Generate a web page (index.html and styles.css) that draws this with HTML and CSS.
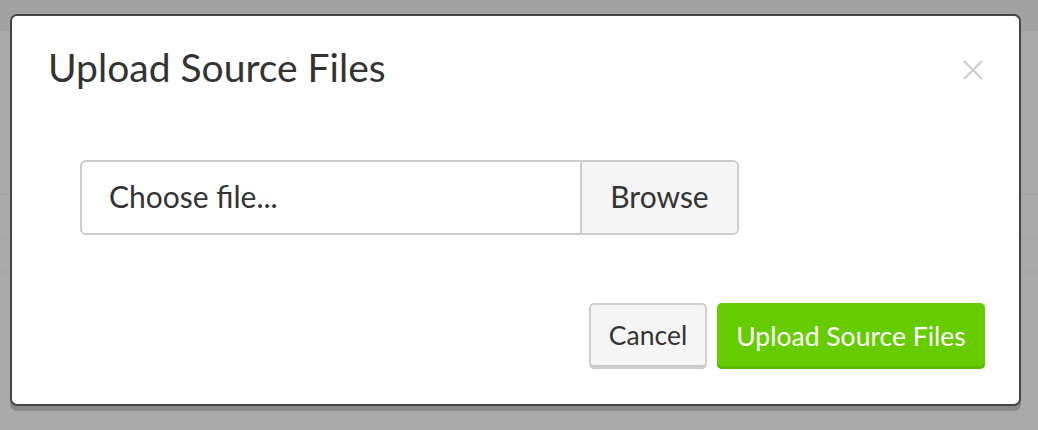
FILE: index.html
```html
<!DOCTYPE html>
<html lang="en">
<head>
<meta charset="utf-8">
<title>Upload Source Files</title>
<link rel="stylesheet" href="styles.css">
</head>
<body>
<div class="backdrop">
  <div class="band"></div>
  <div class="rule rule-a"></div>
  <div class="rule rule-b"></div>
  <div class="rule rule-c"></div>
</div>
<div class="modal">
  <div class="modal-header">
    <h1 class="modal-title">Upload Source Files</h1>
    <button class="close" aria-label="Close">
      <svg width="20" height="20" viewBox="0 0 20 20"><path d="M1 1 L19 19 M19 1 L1 19" stroke="#cfcfcf" stroke-width="2.4" fill="none"/></svg>
    </button>
  </div>
  <div class="modal-body">
    <div class="file-group">
      <div class="file-name">Choose file...</div>
      <div class="file-browse">Browse</div>
    </div>
  </div>
  <div class="modal-footer">
    <button class="btn btn-default">Cancel</button>
    <button class="btn btn-primary">Upload Source Files</button>
  </div>
</div>
</body>
</html>
```

FILE: styles.css
```css
html, body {
  margin: 0;
  padding: 0;
  width: 1038px;
  height: 430px;
  overflow: hidden;
  background: #aaaaaa;
  font-family: Lato, "Open Sans", sans-serif;
}

.backdrop {
  display: flex;
  flex-direction: column;
  height: 430px;
}

.band {
  height: 31px;
  background: #a2a2a2;
}

.rule {
  background: #a3a3a3;
}
.rule-a { height: 2px; margin-top: 162px; }
.rule-b { height: 3px; margin-top: 42px; background: #a6a6a6; }
.rule-c { height: 2px; margin-top: 31px; background: #a6a6a6; }

.modal {
  position: absolute;
  left: 10px;
  top: 14px;
  width: 1011px;
  height: 392px;
  box-sizing: border-box;
  border: 2px solid #444444;
  border-radius: 7px;
  background: #ffffff;
  box-shadow: 0 5px 0 rgba(0, 0, 0, 0.2);
  display: flex;
  flex-direction: column;
}

.modal-header {
  display: flex;
  align-items: center;
  justify-content: space-between;
  padding: 27px 36px 0 36px;
}

.modal-title {
  margin: 0;
  font-size: 39px;
  font-weight: 400;
  line-height: 48px;
  color: #333333;
}

.close {
  border: 0;
  background: none;
  padding: 0;
  margin-top: 6px;
  width: 20px;
  height: 20px;
  display: flex;
  cursor: pointer;
}

.modal-body {
  padding: 69px 0 0 68px;
}

.file-group {
  display: flex;
  width: 659px;
  height: 75px;
  box-sizing: border-box;
  border: 2px solid #cccccc;
  border-radius: 6px;
  overflow: hidden;
}

.file-name {
  flex: 1;
  display: flex;
  align-items: center;
  padding: 0 0 3px 27px;
  font-size: 30px;
  color: #333333;
}

.file-browse {
  width: 155px;
  border-left: 2px solid #cccccc;
  background: #f5f5f5;
  display: flex;
  align-items: center;
  justify-content: center;
  padding-bottom: 3px;
  font-size: 30px;
  color: #333333;
}

.modal-footer {
  margin-top: auto;
  display: flex;
  justify-content: flex-end;
  gap: 10px;
  padding: 0 34px 35px 0;
}

.btn {
  height: 66px;
  box-sizing: border-box;
  border-radius: 5px;
  font-family: Lato, "Open Sans", sans-serif;
  font-size: 26.5px;
  padding: 0 0 1px;
  cursor: pointer;
}

.btn-default {
  width: 118px;
  background: #f5f5f5;
  color: #333333;
  border: 2px solid #cccccc;
  border-bottom-width: 4px;
}

.btn-primary {
  width: 268px;
  background: #66cc00;
  color: #ffffff;
  border: 0;
  box-shadow: inset 0 -3px 0 #5cb800;
}
```
